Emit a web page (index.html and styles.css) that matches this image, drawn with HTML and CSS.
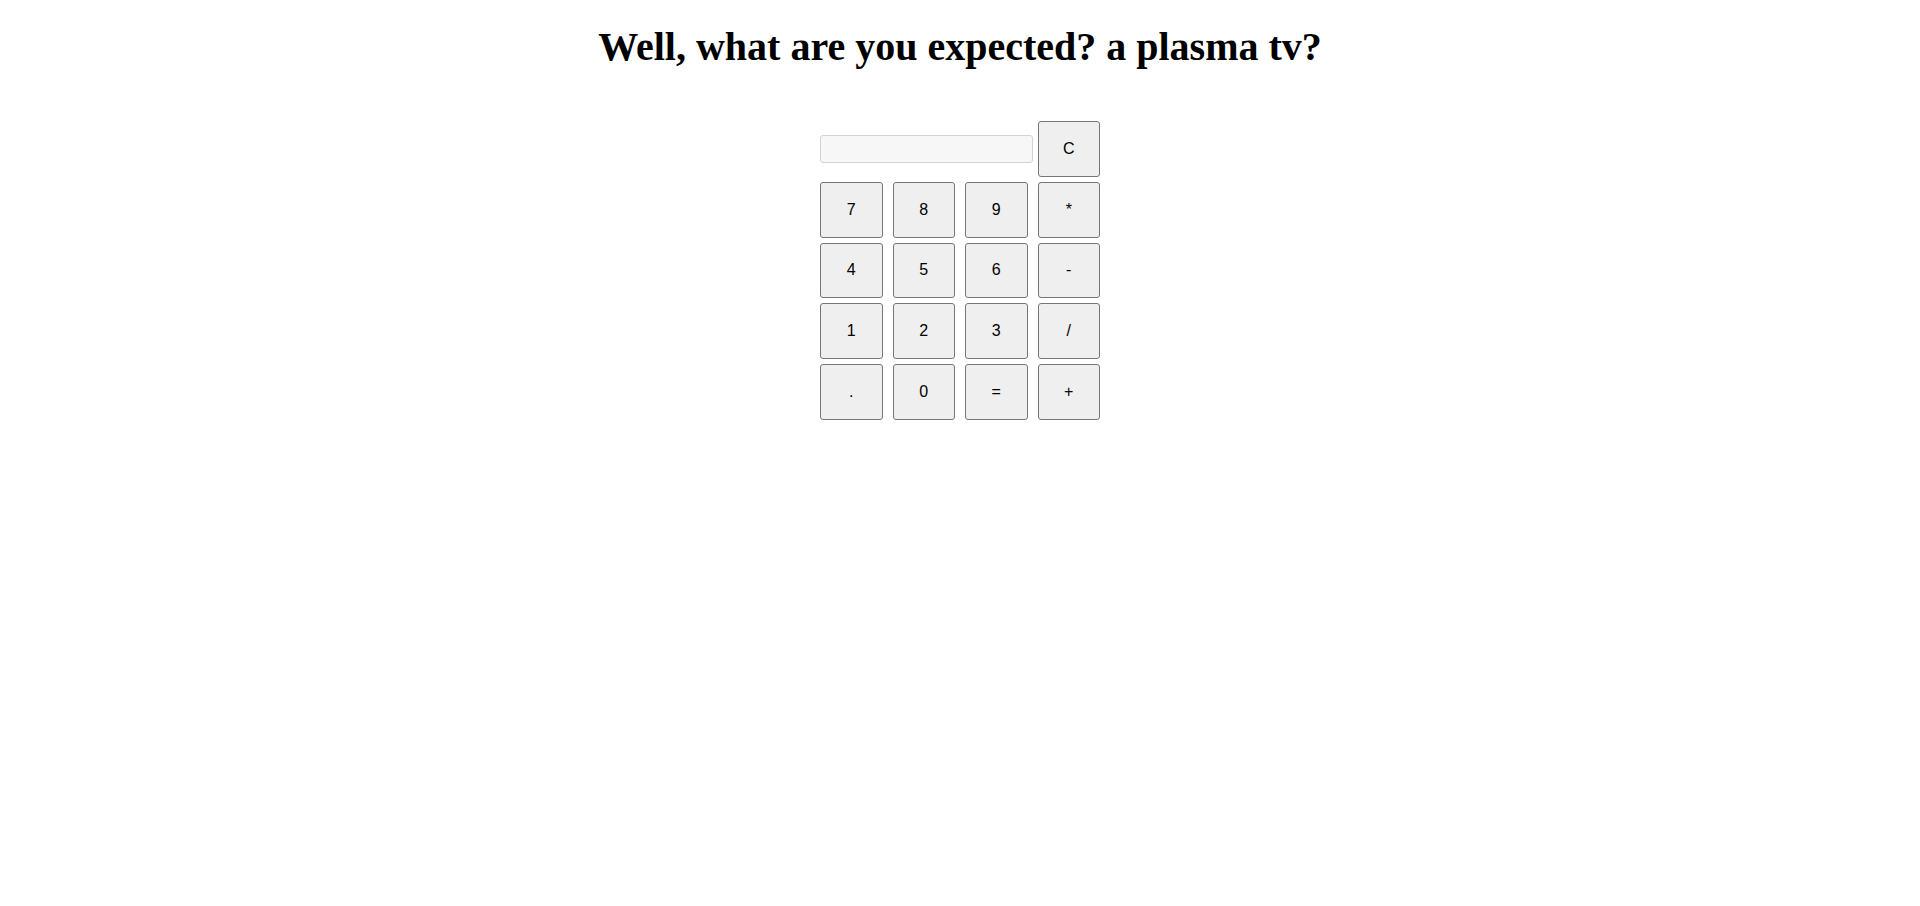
FILE: index.html
```html
<!DOCTYPE html>
<html>
<head>
<meta charset="utf-8">
<link rel="stylesheet" href="styles.css">
</head>
<body>
<h1 class="title">Well, what are you expected? a plasma tv?</h1>
<div class="calc">
  <div class="display-cell"><input class="display" type="text"></div>
  <button class="key">C</button>
  <button class="key">7</button>
  <button class="key">8</button>
  <button class="key">9</button>
  <button class="key">*</button>
  <button class="key">4</button>
  <button class="key">5</button>
  <button class="key">6</button>
  <button class="key">-</button>
  <button class="key">1</button>
  <button class="key">2</button>
  <button class="key">3</button>
  <button class="key">/</button>
  <button class="key">.</button>
  <button class="key">0</button>
  <button class="key">=</button>
  <button class="key">+</button>
</div>
</body>
</html>
```
FILE: styles.css
```css
html, body {
  margin: 0;
  padding: 0;
  background: #ffffff;
}
body {
  padding: 8px;
  font-family: "Liberation Serif", "Times New Roman", serif;
}
.title {
  text-align: center;
  font-size: 40px;
  font-weight: bold;
  line-height: 48px;
  margin: 15px 0 0 0;
  color: #000;
}
.calc {
  width: 280px;
  margin: 50px auto 0;
  display: grid;
  grid-template-columns: repeat(4, 62.5px);
  grid-auto-rows: 55.75px;
  column-gap: 10px;
  row-gap: 5px;
}
.display-cell {
  grid-column: 1 / span 3;
  display: flex;
  align-items: center;
}
.display {
  box-sizing: border-box;
  width: 213px;
  height: 28px;
  margin: 0;
  background: #f7f7f7;
  border: 1px solid #d3d3d3;
  border-radius: 3px;
  outline: none;
  font-family: "Liberation Sans", Arial, sans-serif;
  font-size: 16px;
  padding: 0 4px;
}
.key {
  box-sizing: border-box;
  width: 100%;
  height: 100%;
  margin: 0;
  padding: 0;
  background: #efefef;
  border: 1px solid #767676;
  border-radius: 3px;
  font-family: "Liberation Sans", Arial, sans-serif;
  font-size: 16px;
  color: #000;
}
```
